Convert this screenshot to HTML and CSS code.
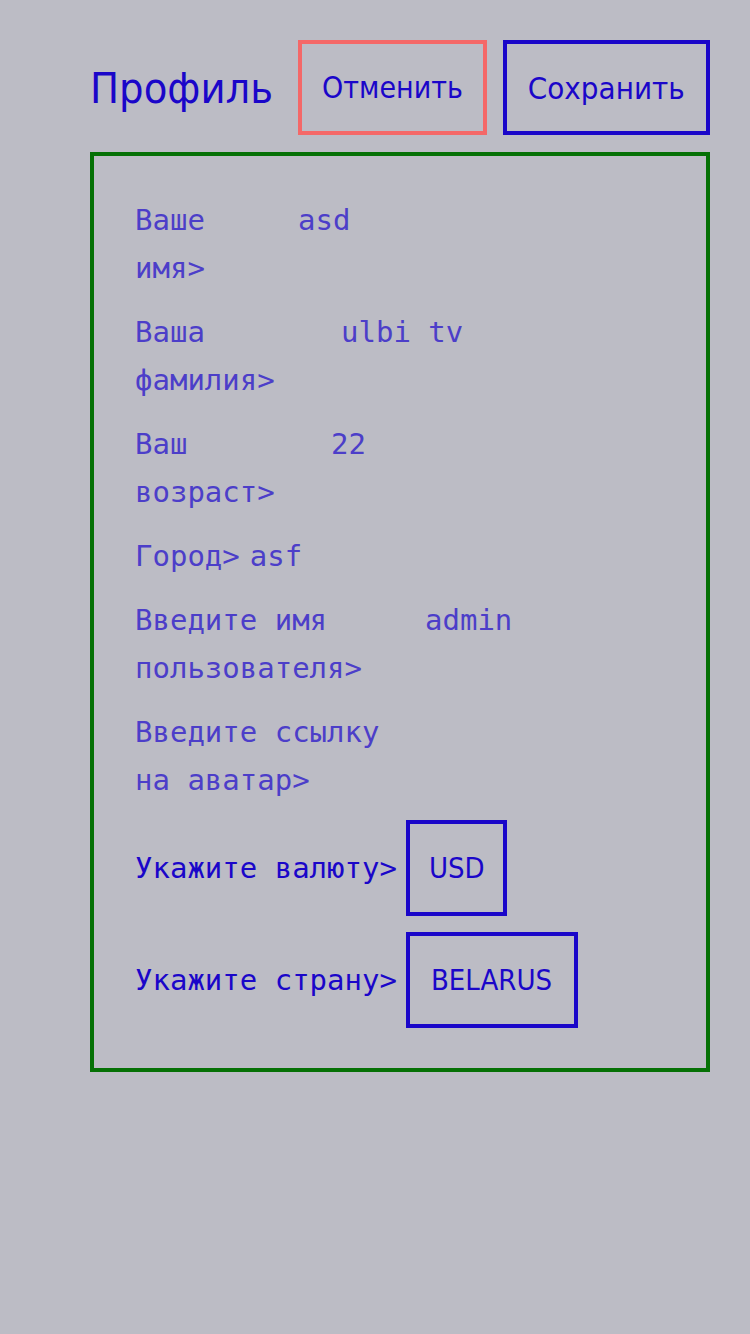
FILE: index.html
```html
<!DOCTYPE html>
<html lang="ru">
<head>
<meta charset="utf-8">
<title>Профиль</title>
<link rel="stylesheet" href="styles.css">
</head>
<body>
<div class="page">
  <header class="header">
    <h1 class="title">Профиль</h1>
    <button class="btn btn-cancel">Отменить</button>
    <button class="btn btn-save">Сохранить</button>
  </header>
  <section class="card">
    <div class="row">
      <span class="label w-name">Ваше имя&gt;</span>
      <span class="value">asd</span>
    </div>
    <div class="row">
      <span class="label w-last">Ваша фамилия&gt;</span>
      <span class="value">ulbi tv</span>
    </div>
    <div class="row">
      <span class="label w-age">Ваш возраст&gt;</span>
      <span class="value">22</span>
    </div>
    <div class="row">
      <span class="label">Город&gt;</span>
      <span class="value">asf</span>
    </div>
    <div class="row">
      <span class="label w-user">Введите имя пользователя&gt;</span>
      <span class="value">admin</span>
    </div>
    <div class="row">
      <span class="label w-avatar">Введите ссылку на аватар&gt;</span>
      <span class="value"></span>
    </div>
    <div class="row select-row">
      <span class="label strong">Укажите валюту&gt;</span>
      <span class="select select-currency">USD</span>
    </div>
    <div class="row select-row">
      <span class="label strong">Укажите страну&gt;</span>
      <span class="select select-country">BELARUS</span>
    </div>
  </section>
</div>
</body>
</html>
```
FILE: styles.css
```css
html, body {
  margin: 0;
  padding: 0;
  background: #bcbcc5;
}

.page {
  padding: 40px 40px 0 90px;
  display: flex;
  flex-direction: column;
  gap: 17px;
}

.header {
  display: flex;
  align-items: center;
  gap: 16px;
}

.title {
  margin: 0 9px 0 0;
  font-family: "DejaVu Sans Condensed", "DejaVu Sans", sans-serif;
  font-stretch: condensed;
  font-weight: 400;
  font-size: 43px;
  line-height: 50px;
  color: #1a06c9;
}

.btn {
  box-sizing: border-box;
  height: 95px;
  padding: 0 20px;
  background: transparent;
  border: 4px solid #1a06c9;
  font-family: "DejaVu Sans Condensed", "DejaVu Sans", sans-serif;
  font-stretch: condensed;
  font-size: 30px;
  color: #1a06c9;
  margin: 0;
}

.btn-cancel {
  border-color: #f46868;
}

.btn-save {
  font-size: 31px;
  padding: 0 21px;
}

.card {
  box-sizing: border-box;
  width: 620px;
  border: 4px solid #057005;
  padding: 40px 41px;
  display: flex;
  flex-direction: column;
  gap: 16px;
}

.row {
  display: flex;
  align-items: flex-start;
  gap: 10px;
  font-family: "DejaVu Sans Mono", monospace;
  font-size: 29px;
  line-height: 48px;
  color: #4c3ec9;
}

.label {
  flex: none;
}

.w-name { width: 153px; }
.w-last { width: 196px; }
.w-age { width: 186px; }
.w-user { width: 280px; }
.w-avatar { width: 260px; }

.select-row {
  align-items: center;
  gap: 9px;
}

.strong {
  color: #1a06c9;
}

.select {
  box-sizing: border-box;
  height: 96px;
  padding: 0 21px;
  border: 4px solid #1a06c9;
  display: flex;
  align-items: center;
  font-family: "DejaVu Sans Condensed", "DejaVu Sans", sans-serif;
  font-stretch: condensed;
  font-size: 29px;
  color: #1a06c9;
}

.select-currency {
  padding: 0 18px 0 19px;
}

.select-country {
  padding: 0 22px 0 21px;
}
```
